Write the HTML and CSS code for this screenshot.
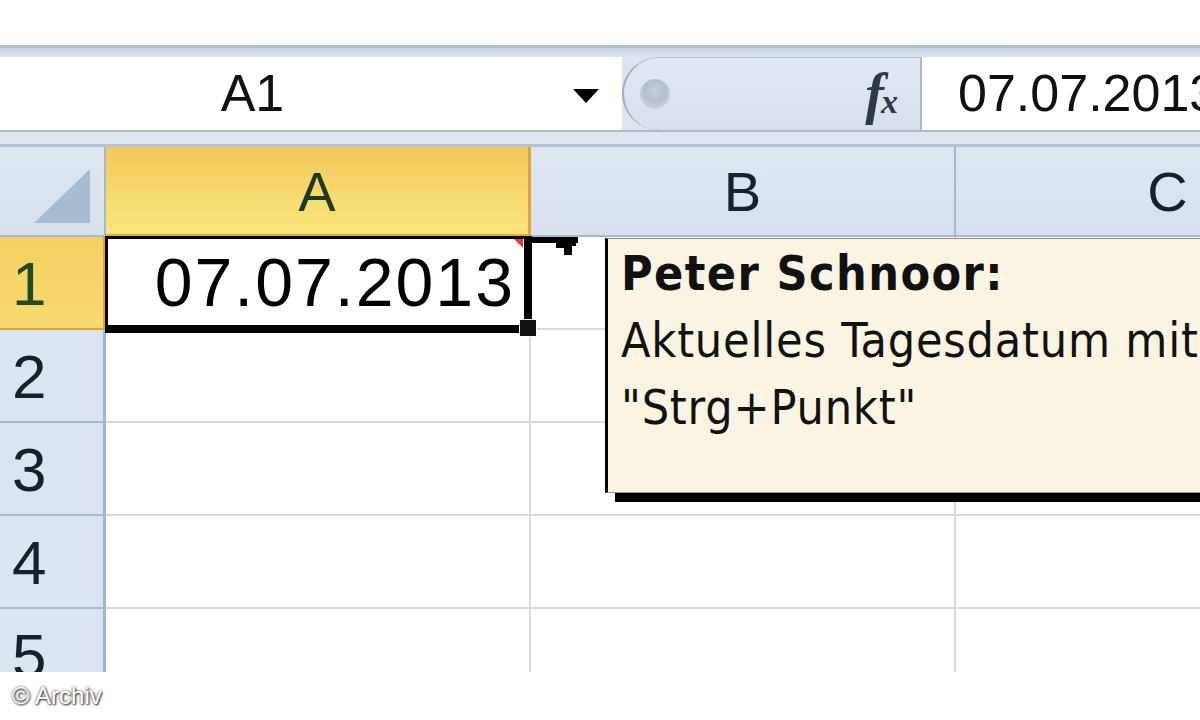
FILE: index.html
```html
<!DOCTYPE html>
<html lang="de">
<head>
<meta charset="utf-8">
<title>Excel Kommentar</title>
<link rel="stylesheet" href="styles.css">
</head>
<body>
<div class="top-space"></div>
<div class="fbar">
  <div class="fbar-row">
    <div class="namebox">
      <span class="nb-text">A1</span>
      <span class="nb-arrow"></span>
    </div>
    <div class="fx-pill">
      <span class="knob"></span>
      <span class="fx">f<span class="fx-x">x</span></span>
    </div>
    <div class="fval">07.07.2013</div>
  </div>
</div>
<div class="sheet">
  <div class="grid">
    <div class="corner">
      <svg class="corner-tri" width="56" height="54" viewBox="0 0 56 54"><polygon points="56,0 56,54 0,54" fill="#a7bbd3"/></svg>
    </div>
    <div class="colhead active">A</div>
    <div class="colhead">B</div>
    <div class="colhead">C</div>

    <div class="rowhead active">1</div>
    <div class="cell date">07.07.2013</div>
    <div class="cell"></div>
    <div class="cell"></div>

    <div class="rowhead">2</div>
    <div class="cell"></div>
    <div class="cell"></div>
    <div class="cell"></div>

    <div class="rowhead">3</div>
    <div class="cell"></div>
    <div class="cell"></div>
    <div class="cell"></div>

    <div class="rowhead">4</div>
    <div class="cell"></div>
    <div class="cell"></div>
    <div class="cell"></div>

    <div class="rowhead">5</div>
    <div class="cell"></div>
    <div class="cell"></div>
    <div class="cell"></div>
  </div>

  <div class="sel">
    <span class="cmt-flag"></span>
    <span class="handle"></span>
  </div>
  <svg class="connector" width="60" height="26" viewBox="0 0 60 26">
    <rect x="0" y="1" width="52" height="6" fill="#000"/>
    <polygon points="30,6 50,6 50,10 46,10 46,19 38,19 38,12 30,12" fill="#000"/>
  </svg>

  <div class="comment">
    <div class="c-author">Peter Schnoor:</div>
    <div class="c-text">Aktuelles Tagesdatum mit</div>
    <div class="c-text">"Strg+Punkt"</div>
  </div>
</div>
<div class="credit">© Archiv</div>
</body>
</html>
```

FILE: styles.css
```css
html, body {
  margin: 0;
  padding: 0;
  background: #ffffff;
  width: 1200px;
  height: 720px;
  overflow: hidden;
  font-family: "Liberation Sans", Arial, sans-serif;
  color: #000;
}

.top-space {
  height: 45px;
}

/* formula bar */
.fbar {
  border-top: 3px solid #aebfd2;
  padding-top: 9px;
  padding-bottom: 12px;
  border-bottom: 3px solid #b3c3d5;
  background: linear-gradient(#c8d5e3, #dce5ef 9px, #dfe7f0);
}

.fbar-row {
  height: 73px;
  display: flex;
  border-bottom: 2px solid #a9bace;
}

.namebox {
  width: 622px;
  background: #fff;
  display: flex;
  align-items: center;
  flex: none;
}

.nb-text {
  width: 505px;
  text-align: center;
  font-size: 52px;
  line-height: 73px;
  color: #111;
}

.nb-arrow {
  margin-left: 68px;
  width: 0;
  height: 0;
  border-left: 13px solid transparent;
  border-right: 13px solid transparent;
  border-top: 14px solid #000;
  margin-top: 4px;
}

.fx-pill {
  width: 300px;
  flex: none;
  box-sizing: border-box;
  background: linear-gradient(#e1e8f1, #d7e0eb);
  border-left: 2px solid #9aaec5;
  border-top: 1px solid #b5c5d7;
  border-radius: 37px 0 0 37px;
  display: flex;
  align-items: center;
  justify-content: space-between;
  padding-left: 16px;
  padding-right: 22px;
  border-right: 2px solid #a9bace;
}

.knob {
  width: 30px;
  height: 30px;
  border-radius: 50%;
  background: radial-gradient(circle at 50% 40%, #c5cfda 0%, #b3bfcc 45%, #dfe6ee 100%);
}

.fx {
  font-family: "Liberation Serif", "Times New Roman", serif;
  font-style: italic;
  font-weight: bold;
  font-size: 56px;
  line-height: 1;
  color: #2c3947;
  letter-spacing: -3px;
}

.fx-x {
  font-size: 34px;
  letter-spacing: 0;
}

.fval {
  flex: 1;
  background: #fff;
  font-size: 52px;
  line-height: 73px;
  padding-left: 36px;
  white-space: nowrap;
  overflow: hidden;
  color: #111;
}

/* sheet */
.sheet {
  position: relative;
  height: 525px;
  overflow: hidden;
}

.grid {
  display: grid;
  grid-template-columns: 106px 425px 425px 425px;
  grid-template-rows: 90px 93px 93px 93px 93px 93px;
}

.corner {
  background: linear-gradient(#dde7f2, #d6e1ed);
  border-right: 2px solid #a4b8ce;
  border-bottom: 2px solid #a4b8ce;
  box-sizing: border-box;
}

.corner-tri {
  display: block;
  margin: 22px 0 0 34px;
}

.colhead {
  background: linear-gradient(#dde7f2, #d6e1ed);
  border-right: 2px solid #a4b8ce;
  border-bottom: 2px solid #a4b8ce;
  box-sizing: border-box;
  text-align: center;
  font-size: 56px;
  line-height: 90px;
  color: #17212b;
}

.colhead.active {
  background: linear-gradient(#f3c75a, #f8df74 70%, #f9e47c);
  border-right: 3px solid #e2a23a;
  border-bottom: 3px solid #e9a83c;
  color: #1f3a22;
}

.rowhead {
  background: #dae5f1;
  border-right: 3px solid #9fb5cd;
  border-bottom: 2px solid #a4b8ce;
  box-sizing: border-box;
  font-size: 62px;
  line-height: 93px;
  padding-left: 12px;
  color: #17212b;
  overflow: hidden;
}

.rowhead.active {
  background: linear-gradient(#f5cf62, #f7da6e);
  border-right: 3px solid #e2a23a;
  border-bottom: 2px solid #e2a23a;
  color: #1f4a24;
}

.cell {
  border-right: 2px solid #dadada;
  border-bottom: 2px solid #dadada;
  box-sizing: border-box;
  background: #fff;
}

.cell.date {
  font-size: 68px;
  line-height: 91px;
  text-align: right;
  padding-right: 14px;
  letter-spacing: 2px;
  white-space: nowrap;
}

/* selection overlay */
.sel {
  position: absolute;
  left: 105px;
  top: 89px;
  width: 427px;
  height: 97px;
  box-sizing: border-box;
  border-left: 3px solid #000;
  border-top: 3px solid #000;
  border-right: 8px solid #000;
  border-bottom: 8px solid #000;
}

.cmt-flag {
  position: absolute;
  right: 1px;
  top: 0;
  width: 0;
  height: 0;
  border-left: 9px solid transparent;
  border-top: 9px solid #e03a2a;
}

.handle {
  position: absolute;
  right: -13px;
  bottom: -12px;
  width: 16px;
  height: 16px;
  background: #111;
  border: 1px solid #fff;
}

.connector {
  position: absolute;
  left: 526px;
  top: 89px;
}

/* comment */
.comment {
  position: absolute;
  left: 605px;
  top: 91px;
  width: 700px;
  height: 255px;
  box-sizing: border-box;
  background: #fcf4e2;
  border-left: 3px solid #000;
  border-top: 1px solid #8a8a8a;
  border-bottom: 1px solid #9a9a9a;
  box-shadow: 10px 9px 0 #000;
  padding: 1px 0 0 13px;
  font-family: "DejaVu Sans Condensed", "DejaVu Sans", sans-serif;
  font-size: 48px;
  line-height: 67px;
  color: #111;
  white-space: nowrap;
  letter-spacing: 0.8px;
}

.c-author {
  font-weight: bold;
  letter-spacing: 1.4px;
}

.credit {
  padding: 10px 0 0 12px;
  font-size: 24px;
  line-height: 28px;
  color: #fff;
  text-shadow: 0 0 3px #444, 1px 1px 2px #333;
}
```
